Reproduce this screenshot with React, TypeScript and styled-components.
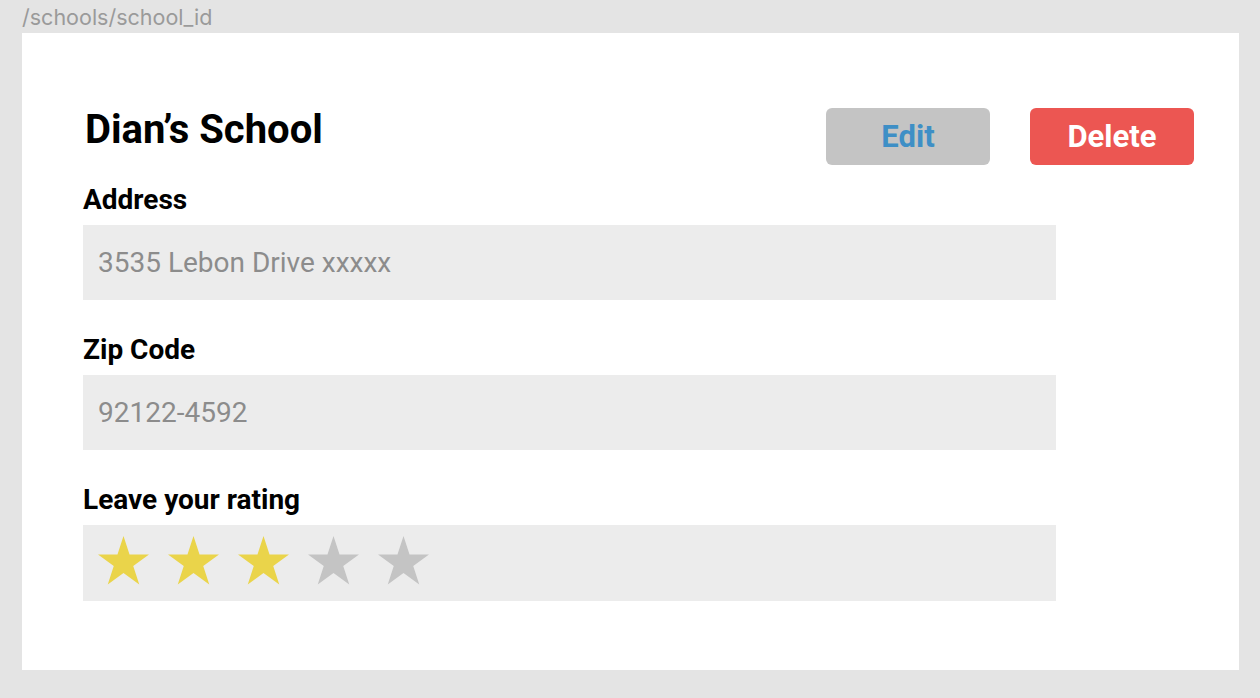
import React from "react";
import styled, { createGlobalStyle } from "styled-components";

const GlobalStyle = createGlobalStyle`
  html, body {
    margin: 0;
    padding: 0;
    background: #e4e4e4;
  }
  body {
    font-family: Roboto, "Liberation Sans", sans-serif;
  }
  * { box-sizing: border-box; }
`;

const Page = styled.div`
  width: 1260px;
  height: 698px;
  padding: 0 21px 0 22px;
  display: flex;
  flex-direction: column;
`;

const PathBar = styled.div`
  height: 33px;
  padding-top: 7px;
  line-height: 1;
  font-family: Inter, "Noto Sans", sans-serif;
  font-size: 21.5px;
  color: #9a9a9a;
  white-space: nowrap;
`;

const Card = styled.main`
  background: #ffffff;
  height: 637px;
  padding: 75px 45px 0 61px;
  display: flex;
  flex-direction: column;
`;

const Header = styled.header`
  display: flex;
  justify-content: space-between;
  align-items: flex-start;
  height: 56px;
  margin-bottom: 20px;
`;

const Title = styled.h1`
  margin: -2px 0 0 2px;
  font-size: 40px;
  line-height: 48px;
  font-weight: 700;
  color: #000;
`;

const Actions = styled.div`
  display: flex;
  gap: 40px;
`;

const ActionButton = styled.button<{ $variant: "edit" | "delete" }>`
  width: 164px;
  height: 57px;
  border: none;
  border-radius: 6px;
  font-family: Roboto, "Liberation Sans", sans-serif;
  font-weight: 700;
  font-size: 31px;
  padding: 0;
  cursor: pointer;
  background: ${(p) => (p.$variant === "edit" ? "#c4c4c4" : "#ec5652")};
  color: ${(p) => (p.$variant === "edit" ? "#3e8fc6" : "#ffffff")};
`;

const Fields = styled.div`
  width: 973px;
  display: flex;
  flex-direction: column;
  gap: 34px;
`;

const Field = styled.section`
  display: flex;
  flex-direction: column;
  gap: 8px;
`;

const Label = styled.label`
  font-size: 28px;
  line-height: 32px;
  margin-bottom: 1px;
  font-weight: 700;
  color: #000;
`;

const InputBox = styled.div`
  height: 75px;
  background: #ececec;
  padding: 0 15px 0 15px;
  display: flex;
  align-items: center;
  font-size: 28px;
  color: #8c8c8c;
`;

const StarRow = styled.div`
  height: 76px;
  background: #ececec;
  padding: 0 15px 5px;
  display: flex;
  align-items: center;
  gap: 19px;
`;

const StarSvg = styled.svg<{ $on: boolean }>`
  width: 51px;
  height: 48.5px;
  fill: ${(p) => (p.$on ? "#eAd44a" : "#c4c4c4")};
  display: block;
`;

const Star = ({ on }: { on: boolean }) => (
  <StarSvg $on={on} viewBox="2.45 0 95.1 90.45">
    <polygon points="50,0 61.23,34.55 97.55,34.55 68.17,55.9 79.39,90.45 50,69.1 20.61,90.45 31.83,55.9 2.45,34.55 38.77,34.55" />
  </StarSvg>
);

export default function App() {
  const rating = 3;
  return (
    <>
      <GlobalStyle />
      <Page>
        <PathBar>/schools/school_id</PathBar>
        <Card>
          <Header>
            <Title>Dian’s School</Title>
            <Actions>
              <ActionButton $variant="edit">Edit</ActionButton>
              <ActionButton $variant="delete">Delete</ActionButton>
            </Actions>
          </Header>
          <Fields>
            <Field>
              <Label>Address</Label>
              <InputBox>3535 Lebon Drive xxxxx</InputBox>
            </Field>
            <Field>
              <Label>Zip Code</Label>
              <InputBox>92122-4592</InputBox>
            </Field>
            <Field>
              <Label>Leave your rating</Label>
              <StarRow>
                {[1, 2, 3, 4, 5].map((i) => (
                  <Star key={i} on={i <= rating} />
                ))}
              </StarRow>
            </Field>
          </Fields>
        </Card>
      </Page>
    </>
  );
}
